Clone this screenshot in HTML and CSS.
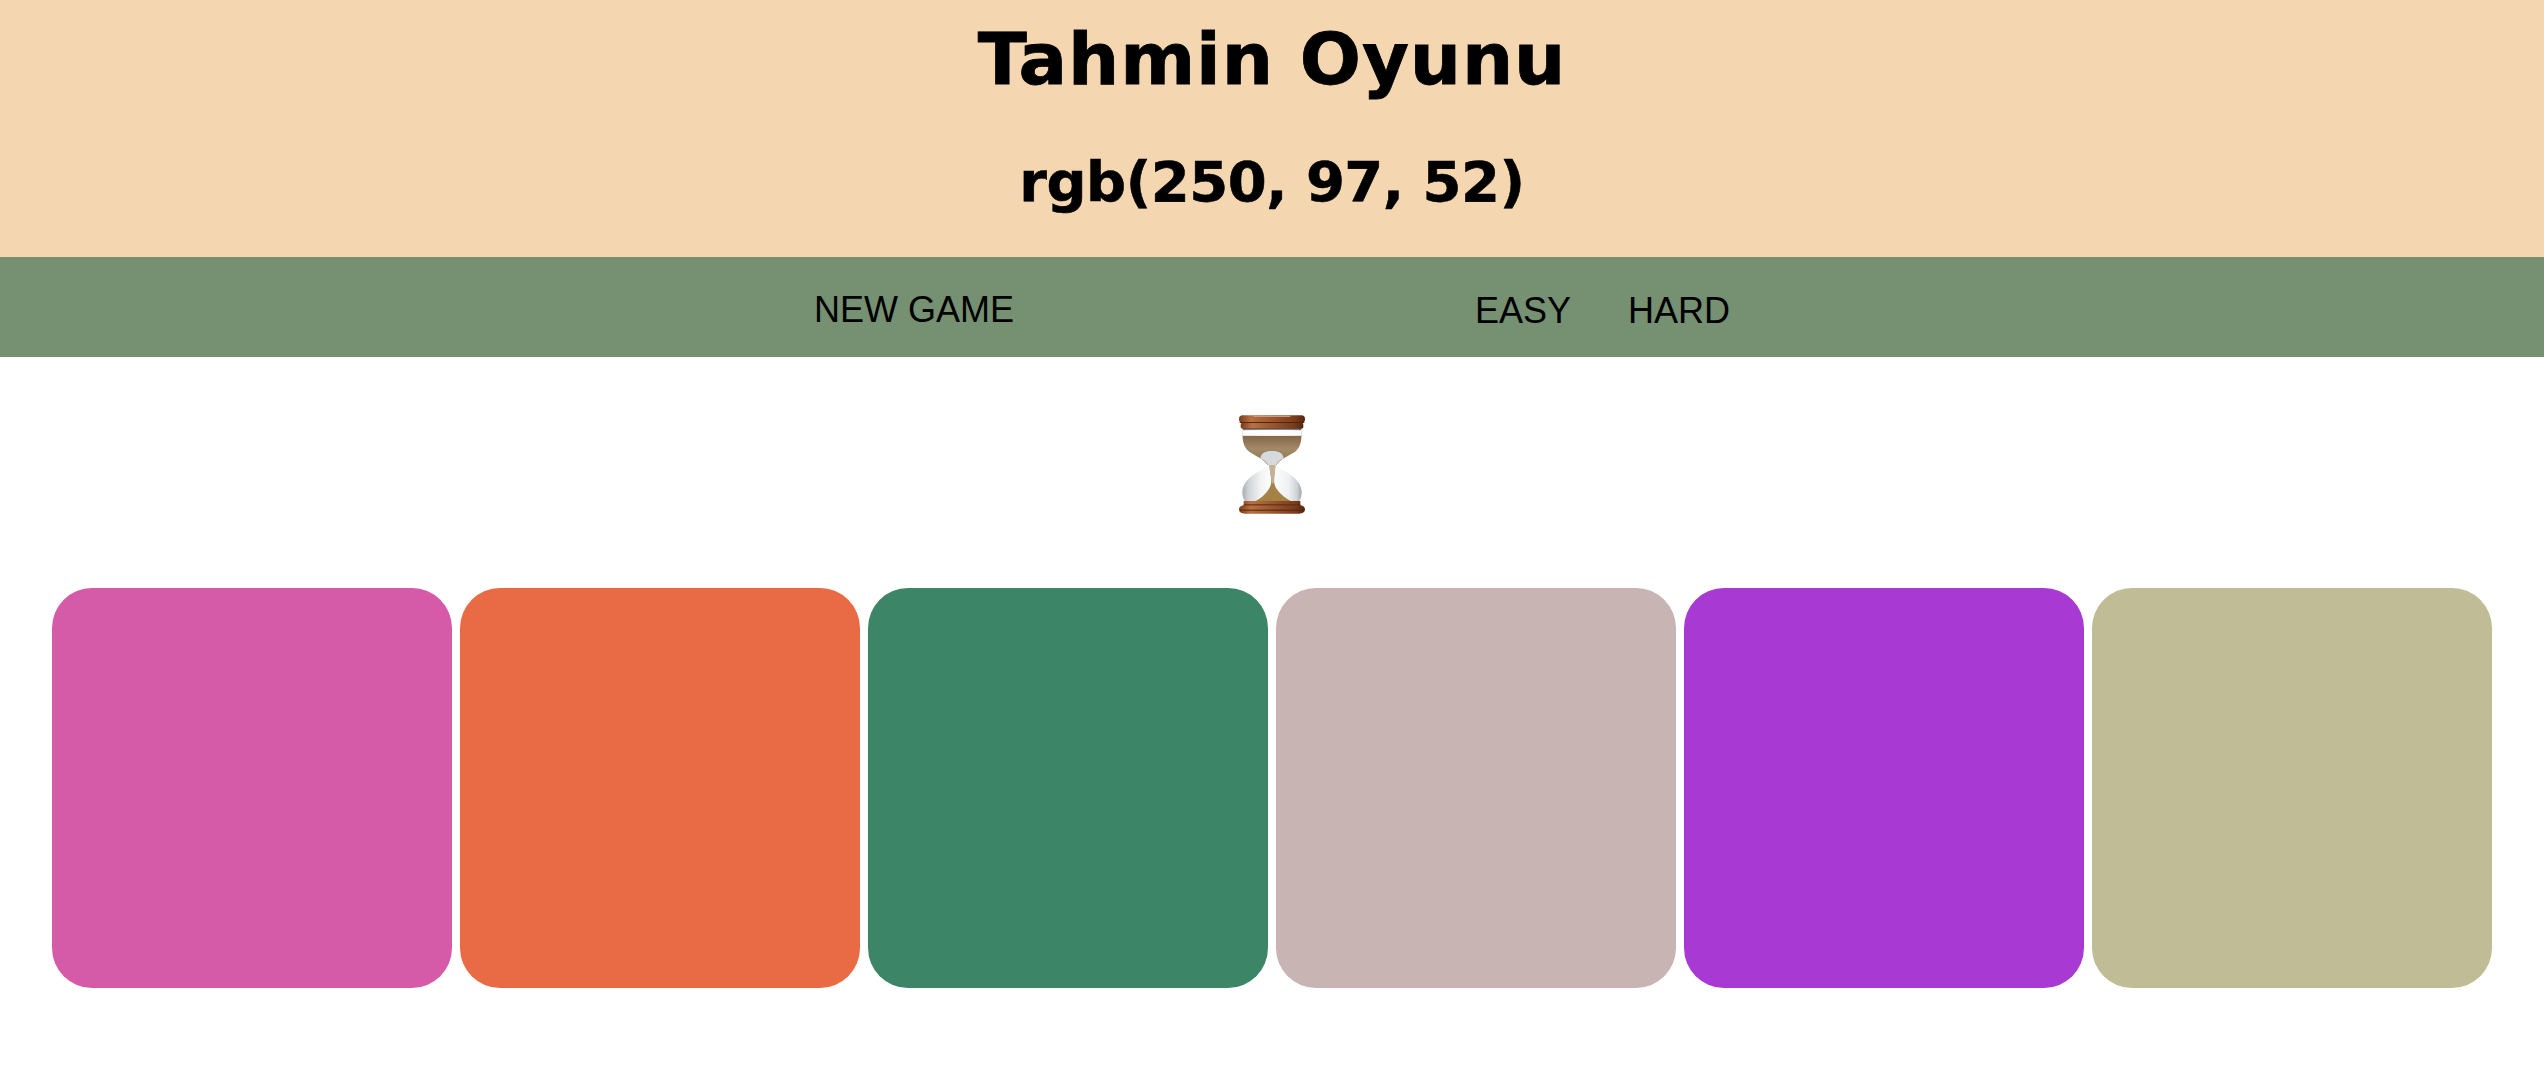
FILE: index.html
```html
<!DOCTYPE html>
<html lang="en">
<head>
  <meta charset="UTF-8">
  <title>Tahmin Oyunu</title>
  <link rel="stylesheet" href="styles.css">
</head>
<body>
  <header class="top">
    <h1>Tahmin Oyunu</h1>
    <h2>rgb(250, 97, 52)</h2>
  </header>

  <nav class="menu">
    <button class="new-game">NEW GAME</button>
    <div class="levels">
      <button>EASY</button>
      <button>HARD</button>
    </div>
  </nav>

  <div class="status">
    <!-- hourglass -->
    <svg class="hourglass" viewBox="0 0 198 300" aria-label="hourglass">
      <defs>
        <linearGradient id="wood" x1="0" x2="1" y1="0" y2="0">
          <stop offset="0" stop-color="#7a3c1c"/>
          <stop offset="0.18" stop-color="#b87042"/>
          <stop offset="0.55" stop-color="#95522c"/>
          <stop offset="0.85" stop-color="#7a3c1c"/>
          <stop offset="1" stop-color="#54260f"/>
        </linearGradient>
        <linearGradient id="glass" x1="0" x2="1" y1="0" y2="0">
          <stop offset="0" stop-color="#a6abb0"/>
          <stop offset="0.1" stop-color="#cfd3d6"/>
          <stop offset="0.3" stop-color="#f0f2f4"/>
          <stop offset="0.5" stop-color="#ffffff"/>
          <stop offset="0.78" stop-color="#eef0f2"/>
          <stop offset="0.92" stop-color="#cfd3d6"/>
          <stop offset="1" stop-color="#a0a5aa"/>
        </linearGradient>
        <linearGradient id="sand" x1="0" x2="0" y1="0" y2="1">
          <stop offset="0" stop-color="#836645"/>
          <stop offset="0.45" stop-color="#a28a69"/>
          <stop offset="1" stop-color="#8c7150"/>
        </linearGradient>
        <linearGradient id="pile" x1="0" x2="0" y1="0" y2="1">
          <stop offset="0" stop-color="#a2845a"/>
          <stop offset="1" stop-color="#a5813f"/>
        </linearGradient>
      </defs>
      <path d="M11 40 H187 V62 C187 85 180 100 168 110 C150 122 118 135 113 150 C118 160 130 165 143 172 C165 185 188 205 188 232 C188 245 184 255 178 262 H20 C14 255 10 245 10 232 C10 205 33 185 55 172 C68 165 80 160 85 150 C80 135 48 122 31 110 C19 100 11 85 11 62 Z" fill="url(#glass)"/>
      <path d="M11 62 H187 C187 85 180 100 168 110 C150 122 118 135 113 150 H85 C80 135 48 122 31 110 C19 100 11 85 11 62 Z" fill="url(#sand)"/>
      <path d="M64 130 C66 114 78 108 99 108 C120 108 132 114 134 130 C122 136 114 142 112 150 H86 C84 142 76 136 64 130 Z" fill="#d6dadd"/>
      <path d="M92 150 H108 C108 170 104 192 106 206 C110 226 134 248 164 262 H42 C72 248 92 226 96 206 C98 192 93 170 92 150 Z" fill="url(#pile)"/>
      <path d="M90 150 H110 C108 170 105 185 104 205 H98 C97 185 92 170 90 150 Z" fill="#c6b296"/>
      <rect x="12" y="46" width="174" height="16" fill="#fcfcfc"/>
      <rect x="5" y="22" width="188" height="20" rx="8" fill="url(#wood)"/>
      <rect x="0" y="1" width="198" height="23" rx="11" fill="url(#wood)"/>
      <rect x="2" y="21" width="194" height="3" fill="#52260f"/>
      <rect x="44" y="2" width="110" height="4" fill="#c99a7c"/>
      <rect x="12" y="40" width="174" height="4" fill="#55504c"/>
      <path d="M14 258 H184 V270 C192 272 198 276 198 283 C198 292 190 296 180 296 H18 C8 296 0 292 0 283 C0 276 6 272 14 270 Z" fill="url(#wood)"/>
      <rect x="3" y="284" width="192" height="3" fill="#52260f"/>
      <rect x="14" y="268" width="170" height="3" fill="#5c2b13"/>
    </svg>
  </div>

  <main class="squares">
    <div class="square pink"></div>
    <div class="square orange"></div>
    <div class="square green"></div>
    <div class="square rose"></div>
    <div class="square purple"></div>
    <div class="square khaki"></div>
  </main>
</body>
</html>
```

FILE: styles.css
```css
body {
  margin: 0;
  background-color: #fff;
  color: #000;
  font-family: "Liberation Sans", Arial, sans-serif;
}

.top {
  padding: 17px 0 43px;
  background-color: #f4d7b0;
  font-family: "DejaVu Sans", sans-serif;
  text-align: center;
}

.top h1 {
  margin: 0 0 48px;
  font-size: 72px;
  font-weight: bold;
  letter-spacing: 0.9px;
  -webkit-text-stroke: 0.8px #000;
}

.top h2 {
  margin: 0;
  font-size: 56px;
  font-weight: bold;
  letter-spacing: -0.5px;
  -webkit-text-stroke: 0.6px #000;
}

.menu {
  display: flex;
  align-items: center;
  height: 100px;
  padding-left: 814px;
  background-color: #769172;
}

.menu button {
  padding: 6px 0 0;
  border: none;
  background: none;
  color: #000;
  font-family: inherit;
  font-size: 36px;
  cursor: pointer;
}

.levels {
  display: flex;
  gap: 57px;
  margin-left: 461px;
  padding-top: 1px;
}

.status {
  display: flex;
  justify-content: center;
  padding: 58px 0 73px;
}

.hourglass {
  display: block;
  width: 66px;
  height: 100px;
}

.squares {
  display: flex;
  gap: 8px;
  padding: 0 52px;
}

.square {
  width: 400px;
  height: 400px;
  border-radius: 40px;
}

.pink { background-color: #d55aa8; }
.orange { background-color: #e96b45; }
.green { background-color: #3c8566; }
.rose { background-color: #c8b4b2; }
.purple { background-color: #a839d2; }
.khaki { background-color: #c0bc95; }
```
